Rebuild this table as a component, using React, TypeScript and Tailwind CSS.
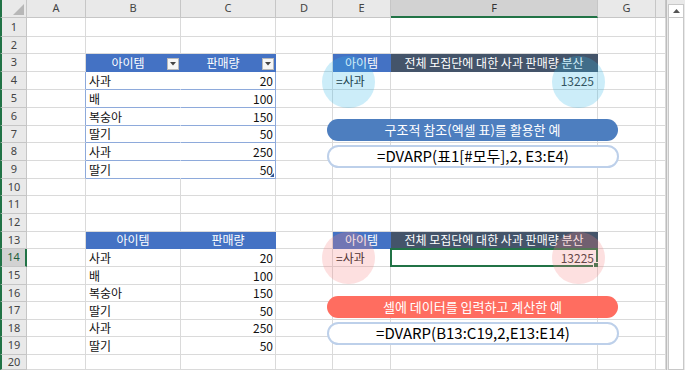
import type { ReactNode } from 'react';

const COLS = ['A', 'B', 'C', 'D', 'E', 'F', 'G', ''];

const fruits: [string, number][] = [
  ['사과', 20],
  ['배', 100],
  ['복숭아', 150],
  ['딸기', 50],
  ['사과', 250],
  ['딸기', 50],
];

const cellFont = { fontFamily: '"Malgun Gothic", "Noto Sans CJK KR", sans-serif' };
const headFont = { fontFamily: '"Noto Sans", sans-serif' };

function FilterButton() {
  return (
    <span className="absolute right-[1px] top-[4px] flex h-[12px] w-[12px] items-center justify-center border border-[#b9b9b9] bg-[#f6f6f6]">
      <svg width="6" height="4" viewBox="0 0 6 4">
        <path d="M0 0h6L3 3.5z" fill="#444" />
      </svg>
    </span>
  );
}

type Cell = { text?: ReactNode; cls?: string };

function getCell(col: string, row: number): Cell {
  const base = 'border-r border-b border-[#dadada] bg-white text-[#111]';
  const tHead = 'bg-[#4472c4] text-white justify-center border-b border-b-[#4472c4]';
  const dark = 'bg-[#44546a] text-white justify-center border-b border-b-[#44546a] border-r-[#44546a]';

  // table 1 (structured reference)
  if (row === 3 && col === 'B') return { text: <>아이템<FilterButton /></>, cls: `${tHead} border-r border-r-[#4472c4] pr-[10px]` };
  if (row === 3 && col === 'C') return { text: <>판매량<FilterButton /></>, cls: `${tHead} border-r border-r-[#4472c4] pr-[10px]` };
  if (row >= 4 && row <= 9) {
    const [name, qty] = fruits[row - 4];
    if (col === 'A') return { cls: 'border-r border-b border-r-[#8eaadb] border-b-[#dadada] bg-white' };
    if (col === 'B') return { text: name, cls: 'border-r border-b border-r-white border-b-[#8eaadb] bg-white text-[#111] pl-[3px]' };
    if (col === 'C')
      return {
        text: (
          <>
            {qty}
            {row === 9 && <span className="absolute bottom-[1px] right-[1px] h-0 w-0 border-b-[4px] border-l-[4px] border-b-[#2f5597] border-l-transparent" />}
          </>
        ),
        cls: 'border-r border-b border-r-[#8eaadb] border-b-[#8eaadb] bg-white text-[#111] justify-end pr-[2px]',
      };
  }

  // table 2 (plain cell range)
  if (row === 13 && col === 'B') return { text: '아이템', cls: `${tHead} border-r border-r-[#4472c4]` };
  if (row === 13 && col === 'C') return { text: '판매량', cls: `${tHead} border-r border-r-[#4472c4]` };
  if (row >= 14 && row <= 19) {
    const [name, qty] = fruits[row - 14];
    if (col === 'B') return { text: name, cls: `${base} pl-[3px]` };
    if (col === 'C') return { text: qty, cls: `${base} justify-end pr-[2px]` };
  }

  // criteria + result blocks
  if ((row === 3 || row === 13) && col === 'E') return { text: '아이템', cls: `${tHead} border-r border-r-[#4472c4]` };
  if ((row === 3 || row === 13) && col === 'F') return { text: '전체 모집단에 대한 사과 판매량 분산', cls: `${dark} border-r` };
  if ((row === 4 || row === 14) && col === 'E') return { text: '=사과', cls: `${base} pl-[3px]` };
  if ((row === 4 || row === 14) && col === 'F') return { text: '13225', cls: `${base} justify-end pr-[3px] text-[#333]` };

  return { cls: base };
}

const ROWS = Array.from({ length: 20 }, (_, i) => i + 1);

// a pair of marker circles drawn over the criteria cell and the result cell
function Markers({ top, tint }: { top: string; tint: string }) {
  return (
    <div className={`pointer-events-none absolute left-[322px] flex w-[283px] justify-between ${top}`}>
      <div className={`h-[52px] w-[53px] rounded-full ${tint}`} />
      <div className={`h-[52px] w-[53px] rounded-full ${tint}`} />
    </div>
  );
}

// pill label + formula box
function Callout({ top, label, color, formula }: { top: string; label: string; color: string; formula: string }) {
  return (
    <div className={`absolute left-[327px] flex w-[292px] flex-col gap-[4px] ${top}`}>
      <div className={`flex h-[22px] w-[291px] items-center justify-center rounded-full text-[13px] text-white ${color}`}>{label}</div>
      <div className="flex h-[23px] items-center justify-center rounded-full border-2 border-[#bdd0ea] bg-white text-[15px] text-black">
        {formula}
      </div>
    </div>
  );
}

export default function App() {
  return (
    <div className="relative flex h-[370px] w-[685px] overflow-hidden bg-white" style={cellFont}>
      <div className="relative grid w-[666px] grid-cols-[27px_59px_95px_95px_57px_58px_207px_58px_10px] grid-rows-[18px_19px_17px_18px_18px_18px_18px_17px_18px_18px_17px_18px_18px_17px_18px_18px_17px_18px_17px_18px_15px] text-[12px]">
        {/* corner */}
        <div className="relative border-r border-b border-[#c6c6c6] border-l-2 border-l-[#217346] bg-[#e9e9e9]">
          <span className="absolute bottom-[2px] right-[2px] h-0 w-0 border-b-[11px] border-l-[11px] border-b-[#b7b7b7] border-l-transparent" />
        </div>
        {COLS.map((c, i) => (
          <div
            key={'h' + i}
            className={
              c === 'F'
                ? 'flex items-center justify-center border-r border-b-2 border-r-[#c6c6c6] border-b-[#217346] bg-[#d2d2d2] text-[11px] text-[#333]'
                : 'flex items-center justify-center border-r border-b border-[#c6c6c6] bg-[#e9e9e9] text-[11px] text-[#444]'
            }
            style={headFont}
          >
            {c}
          </div>
        ))}

        {ROWS.map((r) => (
          <div key={r} className="contents">
            <div
              className={
                r === 14
                  ? 'flex items-center justify-center border-b border-r-2 border-l-2 border-b-[#c6c6c6] border-r-[#217346] border-l-[#217346] bg-[#d2d2d2] text-[11px] text-[#1e5e3a]'
                  : 'flex items-center justify-center border-r border-b border-l-2 border-[#c6c6c6] border-l-[#217346] bg-[#e9e9e9] text-[11px] text-[#444]'
              }
              style={headFont}
            >
              {r}
            </div>
            {COLS.map((c, i) => {
              const cell = getCell(c, r);
              const active = c === 'F' && r === 14;
              return (
                <div key={r + '-' + i} className={`relative flex items-center overflow-visible whitespace-nowrap leading-none ${cell.cls ?? ''}`}>
                  {cell.text}
                  {active && (
                    <div className="absolute -left-[1px] -top-[1px] -right-[1px] -bottom-[1px] border-2 border-[#217346]">
                      <span className="absolute -bottom-[3px] -right-[3px] h-[6px] w-[6px] border border-white bg-[#217346]" />
                    </div>
                  )}
                </div>
              );
            })}
          </div>
        ))}

        <Markers top="top-[56px]" tint="bg-[#32b9e6]/25" />
        <Markers top="top-[232px]" tint="bg-[#f78383]/25" />

        <Callout top="top-[119px]" label="구조적 참조(엑셀 표)를 활용한 예" color="bg-[#4d7ebf]" formula="=DVARP(표1[#모두],2, E3:E4)" />
        <Callout top="top-[296px]" label="셀에 데이터를 입력하고 계산한 예" color="bg-[#ff6d60]" formula="=DVARP(B13:C19,2,E13:E14)" />
      </div>

      {/* vertical scrollbar */}
      <div className="flex w-[19px] flex-col border-l border-[#bdbdbd] bg-[#e9e9e9] px-[1px] pt-[4px]">
        <div className="flex h-[14px] items-center justify-center border border-[#c8c8c8] bg-white">
          <svg width="7" height="4" viewBox="0 0 7 4">
            <path d="M0 4h7L3.5 0z" fill="#555" />
          </svg>
        </div>
        <div className="flex-1 border-x border-b border-[#c8c8c8] bg-white" />
      </div>
    </div>
  );
}
